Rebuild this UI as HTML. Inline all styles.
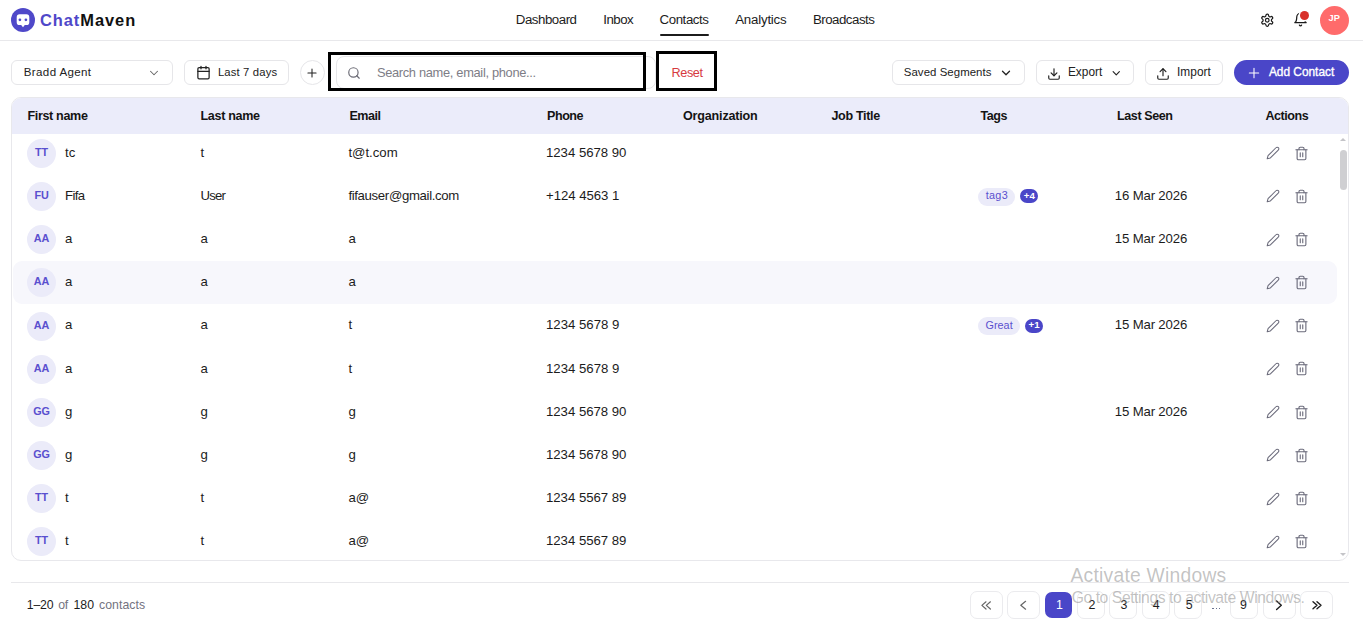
<!DOCTYPE html>
<html><head><meta charset="utf-8"><title>ChatMaven Contacts</title>
<style>
html,body{margin:0;padding:0;background:#fff}
body{width:1363px;height:635px;position:relative;overflow:hidden;font-family:'Liberation Sans', sans-serif}
.t{position:absolute;white-space:nowrap;line-height:1;font-family:'Liberation Sans', sans-serif}
</style></head><body>
<div style="position:absolute;left:0;top:40px;width:1363px;height:1px;background:#e8e8eb"></div><svg style="position:absolute;left:11px;top:7.7px" width="24" height="24" viewBox="0 0 24 24"><circle cx="12" cy="12" r="12" fill="#4f48c9"/><path d="M8.6 6.3h6.8a2.9 2.9 0 0 1 2.9 2.9v5a2.9 2.9 0 0 1-2.9 2.9h-1.6l-1.8 2.2-1.8-2.2h-1.6a2.9 2.9 0 0 1-2.9-2.9v-5a2.9 2.9 0 0 1 2.9-2.9z" fill="#fff"/><circle cx="8.9" cy="11.8" r="1.35" fill="#4f48c9"/><circle cx="14.9" cy="11.8" r="1.35" fill="#4f48c9"/></svg><div class="t" style="left:40.00px;top:11.65px;font-size:16.43px;letter-spacing:0.944px;color:#111;font-weight:700;"><span style="color:#4f48c9">Chat</span>Maven</div><div class="t" style="left:515.80px;top:12.94px;font-size:13.29px;letter-spacing:-0.474px;color:#1c1c1c;font-weight:400;">Dashboard</div><div class="t" style="left:603.30px;top:12.94px;font-size:13.29px;letter-spacing:-0.524px;color:#1c1c1c;font-weight:400;">Inbox</div><div class="t" style="left:659.50px;top:12.94px;font-size:13.29px;letter-spacing:-0.418px;color:#1c1c1c;font-weight:400;">Contacts</div><div class="t" style="left:735.20px;top:12.94px;font-size:13.29px;letter-spacing:-0.207px;color:#1c1c1c;font-weight:400;">Analytics</div><div class="t" style="left:812.90px;top:12.94px;font-size:13.29px;letter-spacing:-0.495px;color:#1c1c1c;font-weight:400;">Broadcasts</div><div style="position:absolute;left:659.5px;top:34px;width:49.5px;height:2px;background:#1c1c1c;border-radius:1px"></div><svg style="position:absolute;left:1259.60px;top:13.10px" width="14.5" height="14.5" viewBox="0 0 24 24" fill="none" stroke="#1a1a1a" stroke-width="2" stroke-linecap="round" stroke-linejoin="round" ><path d="M12.22 2h-.44a2 2 0 0 0-2 2v.18a2 2 0 0 1-1 1.73l-.43.25a2 2 0 0 1-2 0l-.15-.08a2 2 0 0 0-2.73.73l-.22.38a2 2 0 0 0 .73 2.73l.15.1a2 2 0 0 1 1 1.72v.51a2 2 0 0 1-1 1.74l-.15.09a2 2 0 0 0-.73 2.73l.22.38a2 2 0 0 0 2.73.73l.15-.08a2 2 0 0 1 2 0l.43.25a2 2 0 0 1 1 1.73V20a2 2 0 0 0 2 2h.44a2 2 0 0 0 2-2v-.18a2 2 0 0 1 1-1.73l.43-.25a2 2 0 0 1 2 0l.15.08a2 2 0 0 0 2.73-.73l.22-.39a2 2 0 0 0-.73-2.73l-.15-.08a2 2 0 0 1-1-1.74v-.5a2 2 0 0 1 1-1.74l.15-.09a2 2 0 0 0 .73-2.73l-.22-.38a2 2 0 0 0-2.73-.73l-.15.08a2 2 0 0 1-2 0l-.43-.25a2 2 0 0 1-1-1.73V4a2 2 0 0 0-2-2z"/><circle cx="12" cy="12" r="3"/></svg><svg style="position:absolute;left:1292.50px;top:12.00px" width="15" height="15" viewBox="0 0 24 24" fill="none" stroke="#1a1a1a" stroke-width="2" stroke-linecap="round" stroke-linejoin="round" ><path d="M6 8a6 6 0 0 1 12 0c0 7 3 9 3 9H3s3-2 3-9"/><path d="M10.3 21a1.94 1.94 0 0 0 3.4 0"/></svg><div style="position:absolute;left:1300px;top:10.8px;width:9px;height:9px;border-radius:50%;background:#d8302a;box-shadow:0 0 0 1.5px #fff"></div><div style="position:absolute;left:1320px;top:6px;width:29px;height:29px;border-radius:50%;background:#ff6b6b"></div><div class="t" style="left:1328.57px;top:14.17px;font-size:9.20px;letter-spacing:0.000px;color:#fff;font-weight:700;">JP</div><div style="position:absolute;border:1px solid #e6e6e9;border-radius:6px;box-sizing:border-box;background:#fff;left:11px;top:60px;width:161.5px;height:25px"></div><div class="t" style="left:23.80px;top:67.01px;font-size:11.57px;letter-spacing:0.361px;color:#222;font-weight:400;">Bradd Agent</div><svg style="position:absolute;left:147.30px;top:66.00px" width="14" height="14" viewBox="0 0 24 24" fill="none" stroke="#666" stroke-width="1.8" stroke-linecap="round" stroke-linejoin="round" ><path d="m6 9 6 6 6-6"/></svg><div style="position:absolute;border:1px solid #e6e6e9;border-radius:6px;box-sizing:border-box;background:#fff;left:184px;top:60px;width:105px;height:25px"></div><svg style="position:absolute;left:195.50px;top:65.30px" width="15" height="15" viewBox="0 0 24 24" fill="none" stroke="#222" stroke-width="2" stroke-linecap="round" stroke-linejoin="round" ><rect x="3" y="4" width="18" height="18" rx="2"/><path d="M16 2v4M8 2v4M3 10h18"/></svg><div class="t" style="left:217.90px;top:67.25px;font-size:11.29px;letter-spacing:0.148px;color:#222;font-weight:400;">Last 7 days</div><div style="position:absolute;border:1px solid #e6e6e9;border-radius:6px;box-sizing:border-box;background:#fff;left:300px;top:60px;width:25px;height:25px;border-radius:50%"></div><svg style="position:absolute;left:305.20px;top:66.20px" width="14" height="14" viewBox="0 0 24 24" fill="none" stroke="#222" stroke-width="1.8" stroke-linecap="round" stroke-linejoin="round" ><path d="M5 12h14M12 5v14"/></svg><div style="position:absolute;border:1px solid #e6e6e9;border-radius:6px;box-sizing:border-box;background:#fff;left:336px;top:56px;width:320px;height:33px;border-radius:8px"></div><div style="position:absolute;left:328px;top:52px;width:318px;height:39px;border:3px solid #000;box-sizing:border-box"></div><svg style="position:absolute;left:347.00px;top:65.80px" width="14" height="14" viewBox="0 0 24 24" fill="none" stroke="#6b6b75" stroke-width="2" stroke-linecap="round" stroke-linejoin="round" ><circle cx="11" cy="11" r="8"/><path d="m21 21-4.3-4.3"/></svg><div class="t" style="left:376.90px;top:66.71px;font-size:12.86px;letter-spacing:-0.324px;color:#7d7d86;font-weight:400;">Search name, email, phone...</div><div style="position:absolute;left:656px;top:51px;width:61px;height:40px;border:3px solid #000;box-sizing:border-box"></div><div class="t" style="left:671.50px;top:66.93px;font-size:12.71px;letter-spacing:-0.427px;color:#d63a3f;font-weight:400;">Reset</div><div style="position:absolute;border:1px solid #e6e6e9;border-radius:6px;box-sizing:border-box;background:#fff;left:892px;top:60px;width:132.5px;height:25px"></div><div class="t" style="left:903.80px;top:66.83px;font-size:11.43px;letter-spacing:0.051px;color:#222;font-weight:400;">Saved Segments</div><svg style="position:absolute;left:999.20px;top:66.00px" width="14" height="14" viewBox="0 0 24 24" fill="none" stroke="#222" stroke-width="2.2" stroke-linecap="round" stroke-linejoin="round" ><path d="m6 9 6 6 6-6"/></svg><div style="position:absolute;border:1px solid #e6e6e9;border-radius:6px;box-sizing:border-box;background:#fff;left:1036px;top:60px;width:97.5px;height:25px"></div><svg style="position:absolute;left:1047.40px;top:66.50px" width="14" height="14" viewBox="0 0 24 24" fill="none" stroke="#222" stroke-width="2" stroke-linecap="round" stroke-linejoin="round" ><path d="M21 15v4a2 2 0 0 1-2 2H5a2 2 0 0 1-2-2v-4"/><path d="m7 10 5 5 5-5"/><path d="M12 15V3"/></svg><div class="t" style="left:1067.90px;top:66.66px;font-size:11.86px;letter-spacing:0.047px;color:#222;font-weight:400;">Export</div><svg style="position:absolute;left:1110.00px;top:66.70px" width="12.5" height="12.5" viewBox="0 0 24 24" fill="none" stroke="#222" stroke-width="2.2" stroke-linecap="round" stroke-linejoin="round" ><path d="m6 9 6 6 6-6"/></svg><div style="position:absolute;border:1px solid #e6e6e9;border-radius:6px;box-sizing:border-box;background:#fff;left:1145px;top:60px;width:77.5px;height:25px"></div><svg style="position:absolute;left:1156.40px;top:66.80px" width="14" height="14" viewBox="0 0 24 24" fill="none" stroke="#222" stroke-width="2" stroke-linecap="round" stroke-linejoin="round" ><path d="M21 15v4a2 2 0 0 1-2 2H5a2 2 0 0 1-2-2v-4"/><path d="m17 8-5-5-5 5"/><path d="M12 3v12"/></svg><div class="t" style="left:1176.90px;top:66.96px;font-size:11.86px;letter-spacing:0.079px;color:#222;font-weight:400;">Import</div><div style="position:absolute;left:1234px;top:60px;width:115px;height:25px;border-radius:12.5px;background:#4a46c8"></div><svg style="position:absolute;left:1246.30px;top:65.20px" width="16" height="16" viewBox="0 0 24 24" fill="none" stroke="#fff" stroke-width="1.6" stroke-linecap="round" stroke-linejoin="round" ><path d="M5 12h14M12 5v14"/></svg><div class="t" style="left:1268.90px;top:66.96px;font-size:11.86px;letter-spacing:0.005px;color:#fff;font-weight:400;-webkit-text-stroke:0.35px #fff">Add Contact</div><div style="position:absolute;left:11px;top:97px;width:1338px;height:464px;border:1px solid #e8e8ec;border-radius:10px;box-sizing:border-box;overflow:hidden;background:#fff"><div style="position:absolute;left:15px;top:41.00px;width:29px;height:29px;border-radius:50%;background:#ebebf9"></div><div class="t" style="left:23.00px;top:48.93px;font-size:10.80px;letter-spacing:0.000px;color:#5a4fcf;font-weight:700;">TT</div><div class="t" style="left:53.00px;top:47.75px;font-size:13.20px;letter-spacing:0.000px;color:#1c1c1c;font-weight:400;">tc</div><div class="t" style="left:188.60px;top:47.75px;font-size:13.20px;letter-spacing:0.000px;color:#1c1c1c;font-weight:400;">t</div><div class="t" style="left:336.40px;top:47.75px;font-size:13.20px;letter-spacing:0.000px;color:#1c1c1c;font-weight:400;">t@t.com</div><div class="t" style="left:534.00px;top:47.75px;font-size:13.20px;letter-spacing:-0.022px;color:#1c1c1c;font-weight:400;">1234 5678 90</div><svg style="position:absolute;left:1254.30px;top:48.30px" width="14" height="14" viewBox="0 0 24 24" fill="none" stroke="#6b6b7b" stroke-width="1.8" stroke-linecap="round" stroke-linejoin="round" ><path d="M17 3a2.85 2.83 0 1 1 4 4L7.5 20.5 2 22l1.5-5.5Z"/></svg><svg style="position:absolute;left:1281.50px;top:47.70px" width="15" height="15" viewBox="0 0 24 24" fill="none" stroke="#6b6b7b" stroke-width="1.8" stroke-linecap="round" stroke-linejoin="round" ><path d="M3 6h18"/><path d="M19 6v14c0 1-1 2-2 2H7c-1 0-2-1-2-2V6"/><path d="M8 6V4c0-1 1-2 2-2h4c1 0 2 1 2 2v2"/><path d="M10 11v6M14 11v6"/></svg><div style="position:absolute;left:15px;top:84.15px;width:29px;height:29px;border-radius:50%;background:#ebebf9"></div><div class="t" style="left:22.40px;top:92.08px;font-size:10.80px;letter-spacing:0.000px;color:#5a4fcf;font-weight:700;">FU</div><div class="t" style="left:53.00px;top:90.90px;font-size:13.20px;letter-spacing:-0.673px;color:#1c1c1c;font-weight:400;">Fifa</div><div class="t" style="left:188.60px;top:90.90px;font-size:13.20px;letter-spacing:-0.822px;color:#1c1c1c;font-weight:400;">User</div><div class="t" style="left:336.40px;top:90.90px;font-size:13.20px;letter-spacing:-0.343px;color:#1c1c1c;font-weight:400;">fifauser@gmail.com</div><div class="t" style="left:534.00px;top:90.90px;font-size:13.20px;letter-spacing:-0.047px;color:#1c1c1c;font-weight:400;">+124 4563 1</div><div style="position:absolute;left:966.2px;top:89.65px;width:37px;height:18px;border-radius:9px;background:#ebebf9"></div><div class="t" style="left:973.70px;top:92.08px;font-size:10.80px;letter-spacing:0.328px;color:#5a4fcf;font-weight:400;">tag3</div><div style="position:absolute;left:1008.20px;top:91.05px;width:18px;height:14px;border-radius:7px;background:#4a46c8"></div><div class="t" style="left:1011.87px;top:92.65px;font-size:9.70px;letter-spacing:0.000px;color:#fff;font-weight:700;">+4</div><div class="t" style="left:1102.80px;top:90.90px;font-size:13.20px;letter-spacing:-0.162px;color:#1c1c1c;font-weight:400;">16 Mar 2026</div><svg style="position:absolute;left:1254.30px;top:91.45px" width="14" height="14" viewBox="0 0 24 24" fill="none" stroke="#6b6b7b" stroke-width="1.8" stroke-linecap="round" stroke-linejoin="round" ><path d="M17 3a2.85 2.83 0 1 1 4 4L7.5 20.5 2 22l1.5-5.5Z"/></svg><svg style="position:absolute;left:1281.50px;top:90.85px" width="15" height="15" viewBox="0 0 24 24" fill="none" stroke="#6b6b7b" stroke-width="1.8" stroke-linecap="round" stroke-linejoin="round" ><path d="M3 6h18"/><path d="M19 6v14c0 1-1 2-2 2H7c-1 0-2-1-2-2V6"/><path d="M8 6V4c0-1 1-2 2-2h4c1 0 2 1 2 2v2"/><path d="M10 11v6M14 11v6"/></svg><div style="position:absolute;left:15px;top:127.30px;width:29px;height:29px;border-radius:50%;background:#ebebf9"></div><div class="t" style="left:21.80px;top:135.23px;font-size:10.80px;letter-spacing:0.000px;color:#5a4fcf;font-weight:700;">AA</div><div class="t" style="left:53.00px;top:134.05px;font-size:13.20px;letter-spacing:0.000px;color:#1c1c1c;font-weight:400;">a</div><div class="t" style="left:188.60px;top:134.05px;font-size:13.20px;letter-spacing:0.000px;color:#1c1c1c;font-weight:400;">a</div><div class="t" style="left:336.40px;top:134.05px;font-size:13.20px;letter-spacing:0.000px;color:#1c1c1c;font-weight:400;">a</div><div class="t" style="left:1102.80px;top:134.05px;font-size:13.20px;letter-spacing:-0.162px;color:#1c1c1c;font-weight:400;">15 Mar 2026</div><svg style="position:absolute;left:1254.30px;top:134.60px" width="14" height="14" viewBox="0 0 24 24" fill="none" stroke="#6b6b7b" stroke-width="1.8" stroke-linecap="round" stroke-linejoin="round" ><path d="M17 3a2.85 2.83 0 1 1 4 4L7.5 20.5 2 22l1.5-5.5Z"/></svg><svg style="position:absolute;left:1281.50px;top:134.00px" width="15" height="15" viewBox="0 0 24 24" fill="none" stroke="#6b6b7b" stroke-width="1.8" stroke-linecap="round" stroke-linejoin="round" ><path d="M3 6h18"/><path d="M19 6v14c0 1-1 2-2 2H7c-1 0-2-1-2-2V6"/><path d="M8 6V4c0-1 1-2 2-2h4c1 0 2 1 2 2v2"/><path d="M10 11v6M14 11v6"/></svg><div style="position:absolute;left:1px;top:163.45px;width:1324px;height:43px;background:#f7f7fc;border-radius:9px"></div><div style="position:absolute;left:15px;top:170.45px;width:29px;height:29px;border-radius:50%;background:#ebebf9"></div><div class="t" style="left:21.80px;top:178.38px;font-size:10.80px;letter-spacing:0.000px;color:#5a4fcf;font-weight:700;">AA</div><div class="t" style="left:53.00px;top:177.20px;font-size:13.20px;letter-spacing:0.000px;color:#1c1c1c;font-weight:400;">a</div><div class="t" style="left:188.60px;top:177.20px;font-size:13.20px;letter-spacing:0.000px;color:#1c1c1c;font-weight:400;">a</div><div class="t" style="left:336.40px;top:177.20px;font-size:13.20px;letter-spacing:0.000px;color:#1c1c1c;font-weight:400;">a</div><svg style="position:absolute;left:1254.30px;top:177.75px" width="14" height="14" viewBox="0 0 24 24" fill="none" stroke="#6b6b7b" stroke-width="1.8" stroke-linecap="round" stroke-linejoin="round" ><path d="M17 3a2.85 2.83 0 1 1 4 4L7.5 20.5 2 22l1.5-5.5Z"/></svg><svg style="position:absolute;left:1281.50px;top:177.15px" width="15" height="15" viewBox="0 0 24 24" fill="none" stroke="#6b6b7b" stroke-width="1.8" stroke-linecap="round" stroke-linejoin="round" ><path d="M3 6h18"/><path d="M19 6v14c0 1-1 2-2 2H7c-1 0-2-1-2-2V6"/><path d="M8 6V4c0-1 1-2 2-2h4c1 0 2 1 2 2v2"/><path d="M10 11v6M14 11v6"/></svg><div style="position:absolute;left:15px;top:213.60px;width:29px;height:29px;border-radius:50%;background:#ebebf9"></div><div class="t" style="left:21.80px;top:221.53px;font-size:10.80px;letter-spacing:0.000px;color:#5a4fcf;font-weight:700;">AA</div><div class="t" style="left:53.00px;top:220.35px;font-size:13.20px;letter-spacing:0.000px;color:#1c1c1c;font-weight:400;">a</div><div class="t" style="left:188.60px;top:220.35px;font-size:13.20px;letter-spacing:0.000px;color:#1c1c1c;font-weight:400;">a</div><div class="t" style="left:336.40px;top:220.35px;font-size:13.20px;letter-spacing:0.000px;color:#1c1c1c;font-weight:400;">t</div><div class="t" style="left:534.00px;top:220.35px;font-size:13.20px;letter-spacing:0.000px;color:#1c1c1c;font-weight:400;">1234 5678 9</div><div style="position:absolute;left:966.2px;top:219.10px;width:41.7px;height:18px;border-radius:9px;background:#ebebf9"></div><div class="t" style="left:973.45px;top:221.53px;font-size:10.80px;letter-spacing:0.047px;color:#5a4fcf;font-weight:400;">Great</div><div style="position:absolute;left:1012.90px;top:220.50px;width:18px;height:14px;border-radius:7px;background:#4a46c8"></div><div class="t" style="left:1016.57px;top:222.10px;font-size:9.70px;letter-spacing:0.000px;color:#fff;font-weight:700;">+1</div><div class="t" style="left:1102.80px;top:220.35px;font-size:13.20px;letter-spacing:-0.162px;color:#1c1c1c;font-weight:400;">15 Mar 2026</div><svg style="position:absolute;left:1254.30px;top:220.90px" width="14" height="14" viewBox="0 0 24 24" fill="none" stroke="#6b6b7b" stroke-width="1.8" stroke-linecap="round" stroke-linejoin="round" ><path d="M17 3a2.85 2.83 0 1 1 4 4L7.5 20.5 2 22l1.5-5.5Z"/></svg><svg style="position:absolute;left:1281.50px;top:220.30px" width="15" height="15" viewBox="0 0 24 24" fill="none" stroke="#6b6b7b" stroke-width="1.8" stroke-linecap="round" stroke-linejoin="round" ><path d="M3 6h18"/><path d="M19 6v14c0 1-1 2-2 2H7c-1 0-2-1-2-2V6"/><path d="M8 6V4c0-1 1-2 2-2h4c1 0 2 1 2 2v2"/><path d="M10 11v6M14 11v6"/></svg><div style="position:absolute;left:15px;top:256.75px;width:29px;height:29px;border-radius:50%;background:#ebebf9"></div><div class="t" style="left:21.80px;top:264.68px;font-size:10.80px;letter-spacing:0.000px;color:#5a4fcf;font-weight:700;">AA</div><div class="t" style="left:53.00px;top:263.50px;font-size:13.20px;letter-spacing:0.000px;color:#1c1c1c;font-weight:400;">a</div><div class="t" style="left:188.60px;top:263.50px;font-size:13.20px;letter-spacing:0.000px;color:#1c1c1c;font-weight:400;">a</div><div class="t" style="left:336.40px;top:263.50px;font-size:13.20px;letter-spacing:0.000px;color:#1c1c1c;font-weight:400;">t</div><div class="t" style="left:534.00px;top:263.50px;font-size:13.20px;letter-spacing:0.000px;color:#1c1c1c;font-weight:400;">1234 5678 9</div><svg style="position:absolute;left:1254.30px;top:264.05px" width="14" height="14" viewBox="0 0 24 24" fill="none" stroke="#6b6b7b" stroke-width="1.8" stroke-linecap="round" stroke-linejoin="round" ><path d="M17 3a2.85 2.83 0 1 1 4 4L7.5 20.5 2 22l1.5-5.5Z"/></svg><svg style="position:absolute;left:1281.50px;top:263.45px" width="15" height="15" viewBox="0 0 24 24" fill="none" stroke="#6b6b7b" stroke-width="1.8" stroke-linecap="round" stroke-linejoin="round" ><path d="M3 6h18"/><path d="M19 6v14c0 1-1 2-2 2H7c-1 0-2-1-2-2V6"/><path d="M8 6V4c0-1 1-2 2-2h4c1 0 2 1 2 2v2"/><path d="M10 11v6M14 11v6"/></svg><div style="position:absolute;left:15px;top:299.90px;width:29px;height:29px;border-radius:50%;background:#ebebf9"></div><div class="t" style="left:21.20px;top:307.83px;font-size:10.80px;letter-spacing:0.000px;color:#5a4fcf;font-weight:700;">GG</div><div class="t" style="left:53.00px;top:306.65px;font-size:13.20px;letter-spacing:0.000px;color:#1c1c1c;font-weight:400;">g</div><div class="t" style="left:188.60px;top:306.65px;font-size:13.20px;letter-spacing:0.000px;color:#1c1c1c;font-weight:400;">g</div><div class="t" style="left:336.40px;top:306.65px;font-size:13.20px;letter-spacing:0.000px;color:#1c1c1c;font-weight:400;">g</div><div class="t" style="left:534.00px;top:306.65px;font-size:13.20px;letter-spacing:-0.022px;color:#1c1c1c;font-weight:400;">1234 5678 90</div><div class="t" style="left:1102.80px;top:306.65px;font-size:13.20px;letter-spacing:-0.162px;color:#1c1c1c;font-weight:400;">15 Mar 2026</div><svg style="position:absolute;left:1254.30px;top:307.20px" width="14" height="14" viewBox="0 0 24 24" fill="none" stroke="#6b6b7b" stroke-width="1.8" stroke-linecap="round" stroke-linejoin="round" ><path d="M17 3a2.85 2.83 0 1 1 4 4L7.5 20.5 2 22l1.5-5.5Z"/></svg><svg style="position:absolute;left:1281.50px;top:306.60px" width="15" height="15" viewBox="0 0 24 24" fill="none" stroke="#6b6b7b" stroke-width="1.8" stroke-linecap="round" stroke-linejoin="round" ><path d="M3 6h18"/><path d="M19 6v14c0 1-1 2-2 2H7c-1 0-2-1-2-2V6"/><path d="M8 6V4c0-1 1-2 2-2h4c1 0 2 1 2 2v2"/><path d="M10 11v6M14 11v6"/></svg><div style="position:absolute;left:15px;top:343.05px;width:29px;height:29px;border-radius:50%;background:#ebebf9"></div><div class="t" style="left:21.20px;top:350.98px;font-size:10.80px;letter-spacing:0.000px;color:#5a4fcf;font-weight:700;">GG</div><div class="t" style="left:53.00px;top:349.80px;font-size:13.20px;letter-spacing:0.000px;color:#1c1c1c;font-weight:400;">g</div><div class="t" style="left:188.60px;top:349.80px;font-size:13.20px;letter-spacing:0.000px;color:#1c1c1c;font-weight:400;">g</div><div class="t" style="left:336.40px;top:349.80px;font-size:13.20px;letter-spacing:0.000px;color:#1c1c1c;font-weight:400;">g</div><div class="t" style="left:534.00px;top:349.80px;font-size:13.20px;letter-spacing:-0.022px;color:#1c1c1c;font-weight:400;">1234 5678 90</div><svg style="position:absolute;left:1254.30px;top:350.35px" width="14" height="14" viewBox="0 0 24 24" fill="none" stroke="#6b6b7b" stroke-width="1.8" stroke-linecap="round" stroke-linejoin="round" ><path d="M17 3a2.85 2.83 0 1 1 4 4L7.5 20.5 2 22l1.5-5.5Z"/></svg><svg style="position:absolute;left:1281.50px;top:349.75px" width="15" height="15" viewBox="0 0 24 24" fill="none" stroke="#6b6b7b" stroke-width="1.8" stroke-linecap="round" stroke-linejoin="round" ><path d="M3 6h18"/><path d="M19 6v14c0 1-1 2-2 2H7c-1 0-2-1-2-2V6"/><path d="M8 6V4c0-1 1-2 2-2h4c1 0 2 1 2 2v2"/><path d="M10 11v6M14 11v6"/></svg><div style="position:absolute;left:15px;top:386.20px;width:29px;height:29px;border-radius:50%;background:#ebebf9"></div><div class="t" style="left:23.00px;top:394.13px;font-size:10.80px;letter-spacing:0.000px;color:#5a4fcf;font-weight:700;">TT</div><div class="t" style="left:53.00px;top:392.95px;font-size:13.20px;letter-spacing:0.000px;color:#1c1c1c;font-weight:400;">t</div><div class="t" style="left:188.60px;top:392.95px;font-size:13.20px;letter-spacing:0.000px;color:#1c1c1c;font-weight:400;">t</div><div class="t" style="left:336.40px;top:392.95px;font-size:13.20px;letter-spacing:0.000px;color:#1c1c1c;font-weight:400;">a@</div><div class="t" style="left:534.00px;top:392.95px;font-size:13.20px;letter-spacing:-0.022px;color:#1c1c1c;font-weight:400;">1234 5567 89</div><svg style="position:absolute;left:1254.30px;top:393.50px" width="14" height="14" viewBox="0 0 24 24" fill="none" stroke="#6b6b7b" stroke-width="1.8" stroke-linecap="round" stroke-linejoin="round" ><path d="M17 3a2.85 2.83 0 1 1 4 4L7.5 20.5 2 22l1.5-5.5Z"/></svg><svg style="position:absolute;left:1281.50px;top:392.90px" width="15" height="15" viewBox="0 0 24 24" fill="none" stroke="#6b6b7b" stroke-width="1.8" stroke-linecap="round" stroke-linejoin="round" ><path d="M3 6h18"/><path d="M19 6v14c0 1-1 2-2 2H7c-1 0-2-1-2-2V6"/><path d="M8 6V4c0-1 1-2 2-2h4c1 0 2 1 2 2v2"/><path d="M10 11v6M14 11v6"/></svg><div style="position:absolute;left:15px;top:429.35px;width:29px;height:29px;border-radius:50%;background:#ebebf9"></div><div class="t" style="left:23.00px;top:437.28px;font-size:10.80px;letter-spacing:0.000px;color:#5a4fcf;font-weight:700;">TT</div><div class="t" style="left:53.00px;top:436.10px;font-size:13.20px;letter-spacing:0.000px;color:#1c1c1c;font-weight:400;">t</div><div class="t" style="left:188.60px;top:436.10px;font-size:13.20px;letter-spacing:0.000px;color:#1c1c1c;font-weight:400;">t</div><div class="t" style="left:336.40px;top:436.10px;font-size:13.20px;letter-spacing:0.000px;color:#1c1c1c;font-weight:400;">a@</div><div class="t" style="left:534.00px;top:436.10px;font-size:13.20px;letter-spacing:-0.022px;color:#1c1c1c;font-weight:400;">1234 5567 89</div><svg style="position:absolute;left:1254.30px;top:436.65px" width="14" height="14" viewBox="0 0 24 24" fill="none" stroke="#6b6b7b" stroke-width="1.8" stroke-linecap="round" stroke-linejoin="round" ><path d="M17 3a2.85 2.83 0 1 1 4 4L7.5 20.5 2 22l1.5-5.5Z"/></svg><svg style="position:absolute;left:1281.50px;top:436.05px" width="15" height="15" viewBox="0 0 24 24" fill="none" stroke="#6b6b7b" stroke-width="1.8" stroke-linecap="round" stroke-linejoin="round" ><path d="M3 6h18"/><path d="M19 6v14c0 1-1 2-2 2H7c-1 0-2-1-2-2V6"/><path d="M8 6V4c0-1 1-2 2-2h4c1 0 2 1 2 2v2"/><path d="M10 11v6M14 11v6"/></svg><div style="position:absolute;left:0;top:0;width:1338px;height:36px;background:#ebecfa"></div><div class="t" style="left:15.40px;top:11.95px;font-size:12.57px;letter-spacing:-0.330px;color:#141414;font-weight:700;">First name</div><div class="t" style="left:188.50px;top:11.95px;font-size:12.57px;letter-spacing:-0.322px;color:#141414;font-weight:700;">Last name</div><div class="t" style="left:337.50px;top:11.95px;font-size:12.57px;letter-spacing:-0.510px;color:#141414;font-weight:700;">Email</div><div class="t" style="left:535.00px;top:11.95px;font-size:12.57px;letter-spacing:-0.455px;color:#141414;font-weight:700;">Phone</div><div class="t" style="left:671.00px;top:11.95px;font-size:12.57px;letter-spacing:-0.184px;color:#141414;font-weight:700;">Organization</div><div class="t" style="left:819.40px;top:11.95px;font-size:12.57px;letter-spacing:-0.332px;color:#141414;font-weight:700;">Job Title</div><div class="t" style="left:968.40px;top:11.95px;font-size:12.57px;letter-spacing:-0.470px;color:#141414;font-weight:700;">Tags</div><div class="t" style="left:1105.00px;top:11.95px;font-size:12.57px;letter-spacing:-0.423px;color:#141414;font-weight:700;">Last Seen</div><div class="t" style="left:1253.50px;top:11.95px;font-size:12.57px;letter-spacing:-0.483px;color:#141414;font-weight:700;">Actions</div><div style="position:absolute;left:1328px;top:52px;width:7px;height:40px;border-radius:4px;background:#cfcfd2"></div><div style="position:absolute;left:1328px;top:39.5px;width:0;height:0;border-left:3.5px solid transparent;border-right:3.5px solid transparent;border-bottom:3.5px solid #c4c4c8"></div><div style="position:absolute;left:1328px;top:454.5px;width:0;height:0;border-left:3.5px solid transparent;border-right:3.5px solid transparent;border-top:3.5px solid #c4c4c8"></div></div><div style="position:absolute;left:11px;top:582px;width:1338px;height:1px;background:#e8e8eb"></div><div class="t" style="left:26.70px;top:599.00px;font-size:12.29px;letter-spacing:-0.112px;color:#1c1c1c;font-weight:400;">1–20</div><div class="t" style="left:58.20px;top:599.00px;font-size:12.29px;letter-spacing:-0.171px;color:#73737f;font-weight:400;">of</div><div class="t" style="left:73.40px;top:599.00px;font-size:12.29px;letter-spacing:0.054px;color:#1c1c1c;font-weight:400;">180</div><div class="t" style="left:99.00px;top:599.00px;font-size:12.29px;letter-spacing:0.050px;color:#73737f;font-weight:400;">contacts</div><div style="position:absolute;border:1px solid #ebebee;border-radius:7px;box-sizing:border-box;background:#fff;left:969.5px;top:591.4px;width:33.1px;height:27.5px"></div><div style="position:absolute;border:1px solid #ebebee;border-radius:7px;box-sizing:border-box;background:#fff;left:1006.7px;top:591.4px;width:33.7px;height:27.5px"></div><div style="position:absolute;left:1045.1px;top:592px;width:26.7px;height:26px;border-radius:7px;background:#4a46c8"></div><div style="position:absolute;border:1px solid #ebebee;border-radius:7px;box-sizing:border-box;background:#fff;left:1077.4px;top:591.4px;width:27.9px;height:27.5px"></div><div style="position:absolute;border:1px solid #ebebee;border-radius:7px;box-sizing:border-box;background:#fff;left:1109.4px;top:591.4px;width:27.9px;height:27.5px"></div><div style="position:absolute;border:1px solid #ebebee;border-radius:7px;box-sizing:border-box;background:#fff;left:1142.2px;top:591.4px;width:27.9px;height:27.5px"></div><div style="position:absolute;border:1px solid #ebebee;border-radius:7px;box-sizing:border-box;background:#fff;left:1174.4px;top:591.4px;width:28px;height:27.5px"></div><div style="position:absolute;border:1px solid #ebebee;border-radius:7px;box-sizing:border-box;background:#fff;left:1229.6px;top:591.4px;width:28px;height:27.5px"></div><div style="position:absolute;border:1px solid #ebebee;border-radius:7px;box-sizing:border-box;background:#fff;left:1262.5px;top:591.4px;width:33px;height:27.5px"></div><div style="position:absolute;border:1px solid #ebebee;border-radius:7px;box-sizing:border-box;background:#fff;left:1300.3px;top:591.4px;width:33.2px;height:27.5px"></div><div class="t" style="left:1056.00px;top:598.88px;font-size:12.40px;letter-spacing:0.000px;color:#fff;font-weight:400;">1</div><div class="t" style="left:1088.40px;top:599.28px;font-size:12.40px;letter-spacing:0.000px;color:#1c1c1c;font-weight:400;">2</div><div class="t" style="left:1120.50px;top:599.28px;font-size:12.40px;letter-spacing:0.000px;color:#1c1c1c;font-weight:400;">3</div><div class="t" style="left:1152.70px;top:599.28px;font-size:12.40px;letter-spacing:0.000px;color:#1c1c1c;font-weight:400;">4</div><div class="t" style="left:1185.70px;top:599.28px;font-size:12.40px;letter-spacing:0.000px;color:#1c1c1c;font-weight:400;">5</div><div class="t" style="left:1240.10px;top:599.28px;font-size:12.40px;letter-spacing:0.000px;color:#1c1c1c;font-weight:400;">9</div><div style="position:absolute;left:1212.3px;top:607.6px;width:1.3px;height:1.3px;background:#6a7390"></div><div style="position:absolute;left:1215.6px;top:607.6px;width:1.3px;height:1.3px;background:#6a7390"></div><div style="position:absolute;left:1218.9px;top:607.6px;width:1.3px;height:1.3px;background:#6a7390"></div><svg style="position:absolute;left:0;top:0" width="1363" height="635" fill="none" stroke-linecap="round" stroke-linejoin="round"><path d="M986 601.8 981.9 605.4 986 609M990.4 601.8 986.3 605.4 990.4 609" stroke="#666" stroke-width="1.2"/><path d="M1025.6 601.3 1020.8 605.25 1025.6 609.2" stroke="#666" stroke-width="1.2"/><path d="M1276.6 600.9 1281.3 605.25 1276.6 609.6" stroke="#1c1c1c" stroke-width="1.4"/><path d="M1313 601.7 1317 605.25 1313 608.8M1317 601.7 1321 605.25 1317 608.8" stroke="#1c1c1c" stroke-width="1.4"/></svg><div class="t" style="left:1070.50px;top:565.51px;font-size:19.29px;letter-spacing:0.240px;color:rgba(128,128,128,0.47);font-weight:400;">Activate Windows</div><div class="t" style="left:1071.70px;top:589.56px;font-size:15.71px;letter-spacing:-0.434px;color:rgba(128,128,128,0.47);font-weight:400;">Go to Settings to activate Windows.</div>
</body></html>
